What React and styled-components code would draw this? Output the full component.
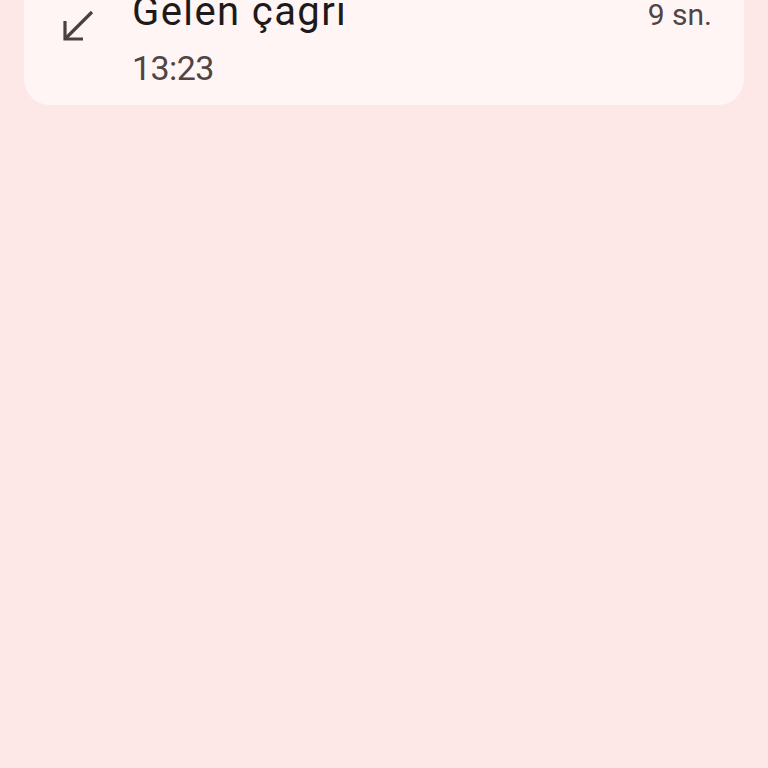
import React from 'react'
import styled, { createGlobalStyle } from 'styled-components'

const Global = createGlobalStyle`
    html, body {
        margin: 0;
        padding: 0;
        background: #fde8e7;
        font-family: Roboto, "Noto Sans", sans-serif;
    }
    body {
        overflow: hidden;
    }
`;

const Page = styled.div`
    width: 768px;
    height: 768px;
    padding: 0 24px;
    box-sizing: border-box;
    background: #fde8e7;
    overflow: hidden;
`;

const Card = styled.div`
    margin-top: -40px;
    background: #fff5f4;
    border-radius: 26px;
    padding: 40px 32px 17px 0;
    display: flex;
    align-items: flex-start;
`;

const IconCell = styled.div`
    width: 108px;
    flex-shrink: 0;
    display: flex;
    justify-content: center;
    padding-top: 9px;
    padding-left: 2px;
    box-sizing: border-box;
`;

const Body = styled.div`
    flex: 1;
    display: flex;
    flex-direction: column;
    gap: 11px;
    margin-top: -10px;
`;

const Row = styled.div`
    display: flex;
    justify-content: space-between;
    align-items: baseline;
`;

const Title = styled.div`
    font-size: 40px;
    line-height: 44px;
    letter-spacing: 1.4px;
    color: #1f1a1a;
`;

const Duration = styled.div`
    font-size: 30px;
    line-height: 44px;
    color: #4f4545;
`;

const Time = styled.div`
    font-size: 34px;
    line-height: 40px;
    letter-spacing: -0.6px;
    color: #4f4545;
`;

const IncomingIcon = () => (
    <svg width="34" height="34" viewBox="0 0 34 34" fill="none" stroke="#4a4040" strokeWidth="3.2" strokeLinecap="butt">
        <path d="M30 3 L3 30" />
        <path d="M3 12 L3 30 L21 30" strokeLinejoin="miter" />
    </svg>
)

export default () => (
    <Page>
        <Global />
        <Card>
            <IconCell>
                <IncomingIcon />
            </IconCell>
            <Body>
                <Row>
                    <Title>Gelen çağrı</Title>
                    <Duration>9 sn.</Duration>
                </Row>
                <Time>13:23</Time>
            </Body>
        </Card>
    </Page>
)
